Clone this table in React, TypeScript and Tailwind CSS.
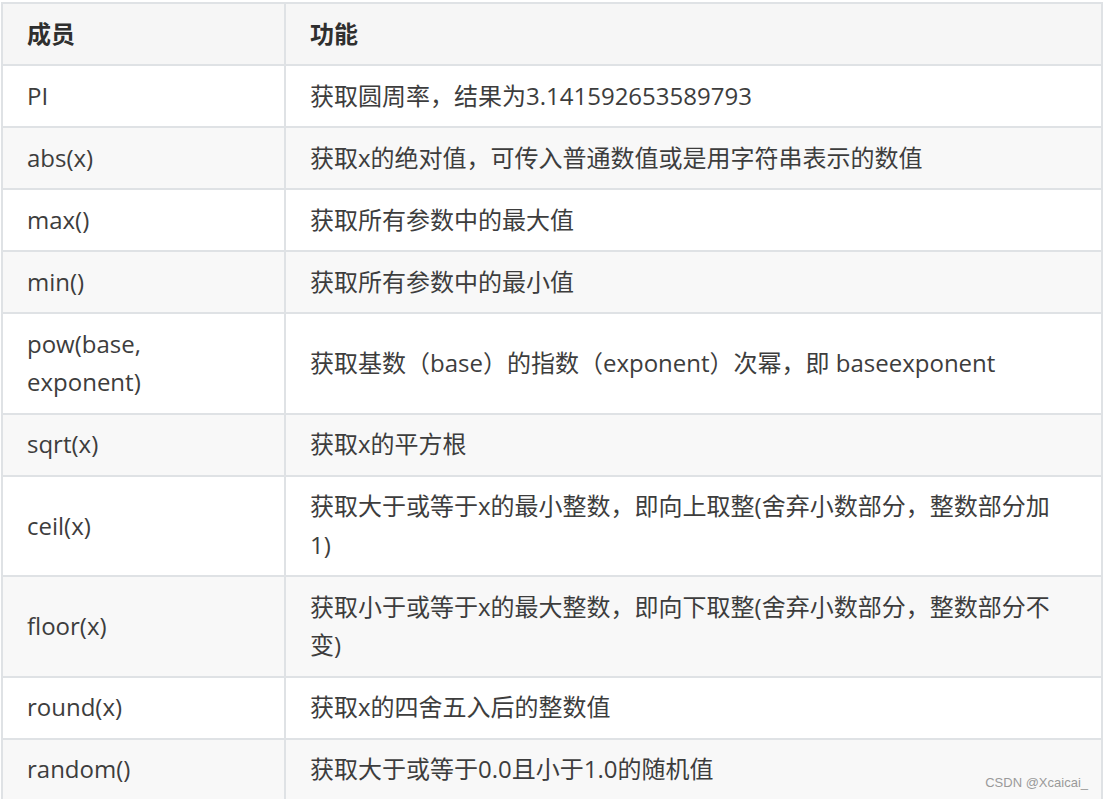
import React from "react";

const ROWS: [string, string][] = [
  ["PI", "获取圆周率，结果为3.141592653589793"],
  ["abs(x)", "获取x的绝对值，可传入普通数值或是用字符串表示的数值"],
  ["max()", "获取所有参数中的最大值"],
  ["min()", "获取所有参数中的最小值"],
  ["pow(base, exponent)", "获取基数（base）的指数（exponent）次幂，即 baseexponent"],
  ["sqrt(x)", "获取x的平方根"],
  ["ceil(x)", "获取大于或等于x的最小整数，即向上取整(舍弃小数部分，整数部分加1)"],
  ["floor(x)", "获取小于或等于x的最大整数，即向下取整(舍弃小数部分，整数部分不变)"],
  ["round(x)", "获取x的四舍五入后的整数值"],
  ["random()", "获取大于或等于0.0且小于1.0的随机值"],
];

const cell = "flex items-center pl-6 py-[10.75px] leading-[38.5px] border-r-2 border-b-2 border-[#dfe2e5]";

const App = () => {
  return (
    <div
      className="relative h-[799px] w-[1103px] overflow-hidden bg-white text-[24px] text-[#3d3d3d]"
      style={{ fontFamily: '"Open Sans", "Noto Sans CJK SC", sans-serif' }}
    >
      <div className="ml-[1px] mt-[2px] w-[1102px] border-l-2 border-t-2 border-[#dfe2e5]">
        {/* header */}
        <div className="flex bg-[#f6f6f6] font-bold text-[#2f2f2f]">
          <div className={`${cell} w-[283px] pr-6`}>成员</div>
          <div className={`${cell} w-[817px] pr-[36px]`}>功能</div>
        </div>
        {ROWS.map((r, index) => (
          <div
            key={index}
            className={index % 2 === 1 ? "flex bg-[#f8f8f8]" : "flex bg-white"}
          >
            <div className={`${cell} w-[283px] pr-6`}>{r[0]}</div>
            <div className={`${cell} w-[817px] pr-[36px]`}>{r[1]}</div>
          </div>
        ))}
      </div>
      <div
        className="absolute right-[15px] top-[774px] text-[13px] leading-[18px] text-[#9a9a9a]"
        style={{ fontFamily: '"Liberation Sans", Arial, sans-serif' }}
      >
        CSDN @Xcaicai_
      </div>
    </div>
  );
};

export default App;
